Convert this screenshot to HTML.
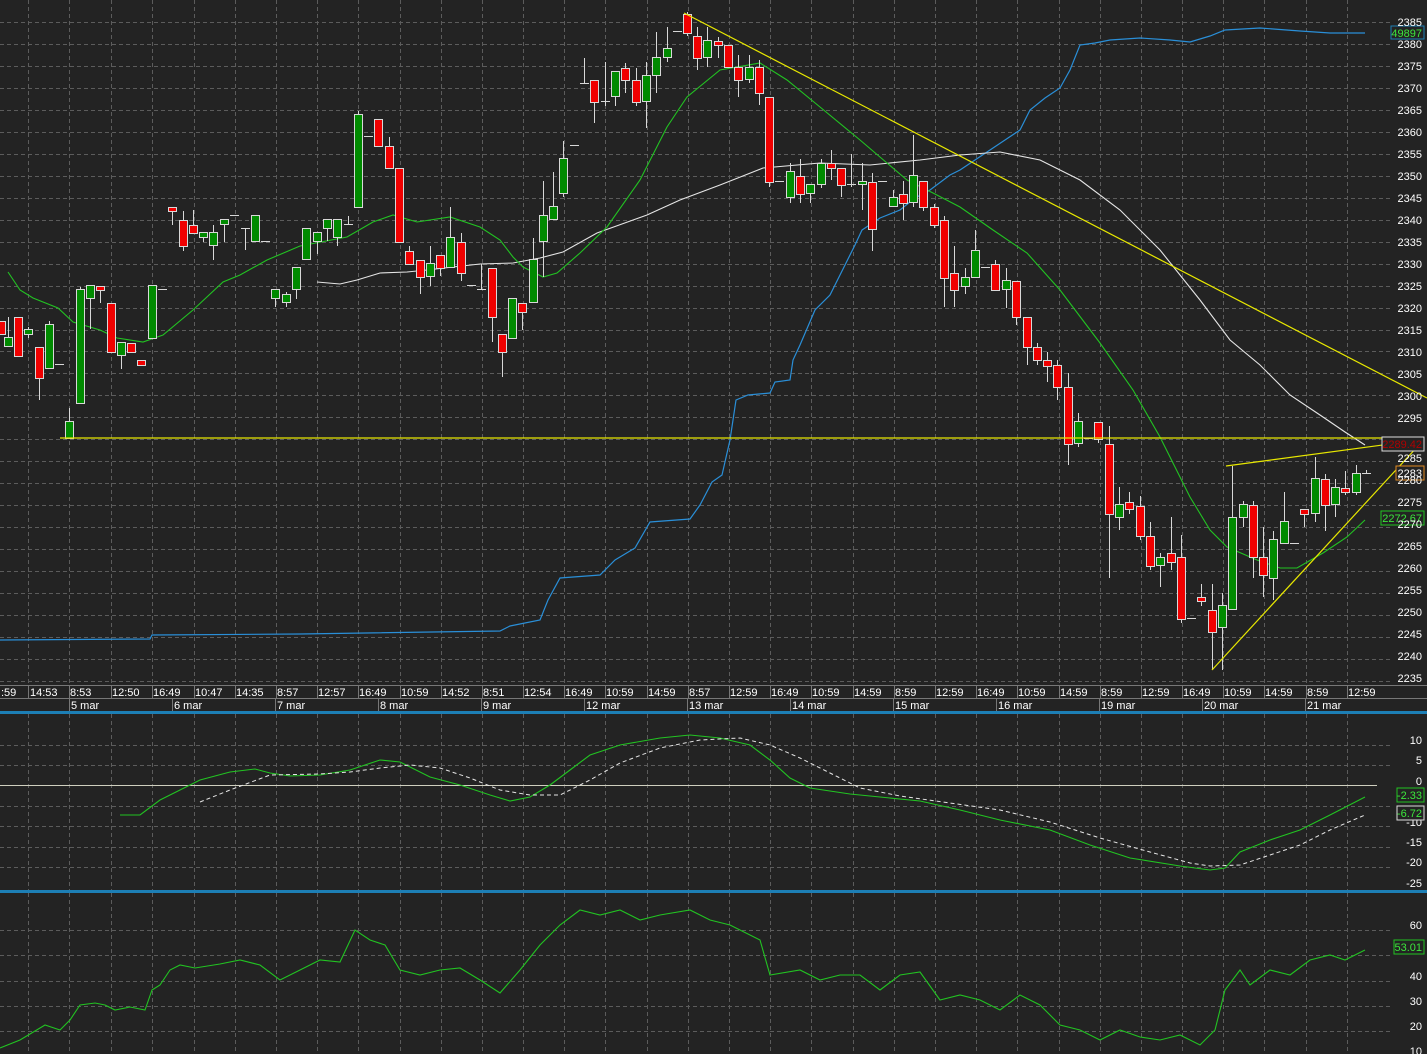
<!DOCTYPE html>
<html><head><meta charset="utf-8"><style>
html,body{margin:0;padding:0;background:#232323;}
svg{display:block}
text{font-family:"Liberation Sans",sans-serif;font-size:11px;fill:#fff}
</style></head><body>
<svg id="s" width="1427" height="1054" viewBox="0 0 1427 1054" xmlns="http://www.w3.org/2000/svg">
<rect width="1427" height="1054" fill="#232323"/>
<g id="grid"></g>
<!-- axis lines -->
<line x1="0" y1="685.5" x2="1427" y2="685.5" stroke="#777"/>
<line x1="0" y1="698.5" x2="1427" y2="698.5" stroke="#777"/>
<rect x="0" y="711" width="1427" height="3" fill="#1d7fb5"/>
<rect x="0" y="890" width="1427" height="3" fill="#1d7fb5"/>
<g id="seps"></g>
<!-- blue line -->
<polyline fill="none" stroke="#2a8fd8" stroke-width="1.2" points="0,640 150,639 152,635 300,634 500,631 510,626 540,620 548,600 560,578 600,575 615,560 635,548 650,522 690,519 700,505 712,482 722,475 730,440 736,400 748,395 770,393 775,382 790,380 793,360 800,345 815,310 830,295 845,265 855,245 862,230 880,218 900,210 915,198 930,190 950,175 960,170 975,160 990,150 1005,140 1020,130 1030,110 1045,98 1060,88 1070,70 1080,45 1095,43 1110,40 1140,38 1170,40 1190,42 1210,36 1225,30 1260,28 1300,31 1330,33 1365,33"/>
<!-- white MA -->
<polyline fill="none" stroke="#e6e6e6" stroke-width="1.1" points="317,282 340,284 357,280 380,273 407,272 427,270 453,267 480,264 513,263 540,258 563,252 597,233 647,215 680,200 720,185 763,168 820,163 870,165 920,160 960,155 1000,152 1040,160 1080,180 1120,210 1160,250 1200,300 1230,340 1260,365 1290,395 1320,415 1345,432 1365,445"/>
<!-- green MA -->
<polyline fill="none" stroke="#22c322" stroke-width="1.1" points="8,272 20,290 33,298 58,308 73,322 100,330 117,338 143,342 163,335 193,310 223,282 240,275 267,260 300,246 347,237 373,222 393,215 417,222 450,217 480,227 500,240 513,257 523,267 543,277 557,273 580,253 607,227 640,180 667,127 687,97 720,70 760,63 787,80 820,107 860,140 887,163 907,180 933,193 960,207 993,230 1027,253 1060,290 1100,343 1133,390 1160,437 1190,497 1210,530 1227,547 1257,560 1280,568 1297,568 1323,553 1347,537 1365,520"/>
<g id="candles"></g>
<!-- yellow lines -->
<g stroke="#e8e800" stroke-width="1.2" fill="none">
<line x1="60" y1="438" x2="1400" y2="438"/>
<line x1="684" y1="13" x2="1427" y2="398"/>
<line x1="1226" y1="466" x2="1420" y2="440"/>
<line x1="1212" y1="670" x2="1418" y2="446"/>
</g>
<!-- main price labels -->
<g id="plabels" text-anchor="end"></g>
<rect x="1391" y="26" width="33" height="13" fill="#232323" stroke="#1d7fb5"/>
<text x="1422" y="37" text-anchor="end" style="fill:#3ce63c">49897</text>
<rect x="1382" y="437" width="42" height="14" fill="#232323" stroke="#ddd"/>
<text x="1422" y="448" text-anchor="end" style="fill:#b00000">2289.42</text>
<rect x="1396" y="466" width="28" height="14" fill="#232323" stroke="#e08a20"/>
<text x="1422" y="477" text-anchor="end">2283</text>
<rect x="1381" y="511" width="43" height="14" fill="#232323" stroke="#22c322"/>
<text x="1422" y="522" text-anchor="end" style="fill:#3ce63c">2272.67</text>
<!-- time labels -->
<g id="tl">
<text x="1" y="696">:59</text><text x="30" y="696">14:53</text><text x="70" y="696">8:53</text><text x="112" y="696">12:50</text><text x="153" y="696">16:49</text><text x="195" y="696">10:47</text><text x="236" y="696">14:35</text><text x="277" y="696">8:57</text><text x="318" y="696">12:57</text><text x="359" y="696">16:49</text><text x="401" y="696">10:59</text><text x="442" y="696">14:52</text><text x="483" y="696">8:51</text><text x="524" y="696">12:54</text><text x="565" y="696">16:49</text><text x="606" y="696">10:59</text><text x="648" y="696">14:59</text><text x="689" y="696">8:57</text><text x="730" y="696">12:59</text><text x="771" y="696">16:49</text><text x="812" y="696">10:59</text><text x="854" y="696">14:59</text><text x="895" y="696">8:59</text><text x="936" y="696">12:59</text><text x="977" y="696">16:49</text><text x="1018" y="696">10:59</text><text x="1060" y="696">14:59</text><text x="1101" y="696">8:59</text><text x="1142" y="696">12:59</text><text x="1183" y="696">16:49</text><text x="1224" y="696">10:59</text><text x="1265" y="696">14:59</text><text x="1307" y="696">8:59</text><text x="1348" y="696">12:59</text>
<text x="71" y="709">5 mar</text><text x="174" y="709">6 mar</text><text x="277" y="709">7 mar</text><text x="380" y="709">8 mar</text><text x="483" y="709">9 mar</text><text x="586" y="709">12 mar</text><text x="689" y="709">13 mar</text><text x="792" y="709">14 mar</text><text x="895" y="709">15 mar</text><text x="998" y="709">16 mar</text><text x="1101" y="709">19 mar</text><text x="1204" y="709">20 mar</text><text x="1307" y="709">21 mar</text>
</g>
<!-- panel 2 -->
<line x1="0" y1="785.5" x2="1377" y2="785.5" stroke="#cfcfbf" stroke-width="1"/>
<polyline fill="none" stroke="#22c322" stroke-width="1.1" points="120,815 140,815 160,800 180,790 200,780 230,772 255,769 270,773 290,776 320,775 350,770 380,760 400,762 430,777 460,785 490,795 510,801 530,797 550,785 570,770 590,755 620,745 660,738 690,735 720,738 750,745 770,760 790,778 810,788 850,794 880,797 920,801 960,810 1000,820 1050,830 1090,845 1130,858 1180,866 1210,870 1225,868 1240,852 1270,840 1300,830 1330,815 1365,797"/>
<polyline fill="none" stroke="#e6e6e6" stroke-width="1" stroke-dasharray="4,3" points="200,802 230,790 270,775 320,774 350,772 380,768 410,765 440,768 470,778 500,790 530,795 560,795 590,780 620,763 660,748 700,740 740,738 770,745 800,758 830,773 860,788 900,796 950,803 1000,810 1050,822 1100,838 1150,852 1190,863 1210,866 1240,865 1270,855 1300,845 1330,830 1365,815"/>
<g text-anchor="end">
<text x="1422" y="744">10</text><text x="1422" y="764">5</text><text x="1422" y="785">0</text><text x="1422" y="826">-10</text><text x="1422" y="846">-15</text><text x="1422" y="866">-20</text><text x="1422" y="887">-25</text>
</g>
<rect x="1397" y="788" width="27" height="14" fill="#232323" stroke="#22c322"/>
<text x="1422" y="799" text-anchor="end" style="fill:#3ce63c">-2.33</text>
<rect x="1397" y="806" width="27" height="14" fill="#232323" stroke="#ddd"/>
<text x="1422" y="817" text-anchor="end" style="fill:#3ce63c">-6.72</text>
<!-- panel 3 -->
<polyline fill="none" stroke="#22c322" stroke-width="1.1" points="0,1048 20,1040 45,1025 60,1030 70,1020 80,1005 95,1003 105,1005 115,1010 130,1007 145,1010 152,990 160,985 170,970 180,965 195,968 220,964 240,960 260,965 280,980 300,970 320,960 340,962 355,930 370,940 385,945 400,970 420,975 440,970 460,968 480,980 500,993 520,970 540,945 560,925 580,910 600,915 620,910 640,920 660,915 690,910 710,920 730,925 760,940 770,975 800,970 820,980 840,975 860,975 880,990 900,975 920,972 940,1000 960,995 980,1000 1000,1010 1020,995 1040,1005 1060,1025 1080,1030 1100,1040 1120,1030 1140,1037 1160,1040 1180,1035 1200,1045 1215,1030 1225,990 1240,970 1250,985 1270,970 1290,975 1310,960 1330,955 1345,960 1365,950"/>
<g text-anchor="end">
<text x="1422" y="929">60</text><text x="1422" y="980">40</text><text x="1422" y="1005">30</text><text x="1422" y="1030">20</text><text x="1422" y="1055">10</text>
</g>
<rect x="1394" y="940" width="30" height="14" fill="#232323" stroke="#22c322"/>
<text x="1422" y="951" text-anchor="end" style="fill:#3ce63c">53.01</text>
</svg>
<script>
(function(){
var NS="http://www.w3.org/2000/svg";
function el(p,t,a){var e=document.createElementNS(NS,t);for(var k in a)e.setAttribute(k,a[k]);p.appendChild(e);return e;}
var g=document.getElementById('grid');
var vx=[28,69,111,152,194,235,276,317,358,400,441,482,523,564,605,647,688,729,770,811,853,894,935,976,1017,1059,1100,1141,1182,1223,1264,1306,1347];
var sh="#5c5c5c";
vx.forEach(function(x){
 el(g,'line',{x1:x+.5,y1:0,x2:x+.5,y2:685,stroke:sh,'stroke-dasharray':'4,3'});
 el(g,'line',{x1:x+.5,y1:714,x2:x+.5,y2:890,stroke:sh,'stroke-dasharray':'4,3'});
 el(g,'line',{x1:x+.5,y1:893,x2:x+.5,y2:1054,stroke:sh,'stroke-dasharray':'4,3'});
 el(g,'line',{x1:x+.5,y1:686,x2:x+.5,y2:698,stroke:'#777'});
});
[69,172,275,378,481,584,687,790,893,996,1099,1202,1305].forEach(function(x){
 el(g,'line',{x1:x+.5,y1:699,x2:x+.5,y2:711,stroke:'#777'});
});
for(var p=2385;p>=2235;p-=5){var y=Math.round(22+(2385-p)*4.3933)+.5;
 el(g,'line',{x1:0,y1:y,x2:1390,y2:y,stroke:sh,'stroke-dasharray':'4,3'});}
[745,765,806,826,847,867].forEach(function(y){el(g,'line',{x1:0,y1:y+.5,x2:1390,y2:y+.5,stroke:sh,'stroke-dasharray':'4,3'});});
[930,955,981,1006,1031].forEach(function(y){el(g,'line',{x1:0,y1:y+.5,x2:1390,y2:y+.5,stroke:sh,'stroke-dasharray':'4,3'});});
var c=[[1,'r',321,334,321,334],[8,'g',337,346,317,346],[18,'r',317,356,317,356],[28,'g',329,334,327,338],[39,'r',347,378,347,400],[49,'g',324,368,321,368],[59,'d',364,364,364,364],[69,'g',421,438,408,438],[80,'g',289,403,287,403],[90,'g',285,298,285,329],[100,'r',286,290,286,303],[111,'r',303,352,303,352],[121,'g',342,355,342,369],[131,'r',343,352,343,352],[141,'r',360,365,360,365],[152,'g',285,338,285,338],[162,'d',289,289,289,289],[172,'r',207,211,207,225],[183,'r',220,246,211,251],[193,'r',225,233,210,233],[203,'g',232,237,232,242],[213,'g',232,245,225,260],[224,'g',219,224,219,242],[234,'d',215,215,215,215],[245,'d',228,228,228,250],[255,'g',215,241,215,241],[265,'d',241,241,241,241],[275,'g',289,298,289,307],[286,'g',294,302,292,307],[296,'g',267,289,267,299],[306,'g',228,259,228,259],[317,'g',232,241,232,254],[327,'g',219,228,219,241],[337,'g',219,237,219,246],[348,'d',224,224,216,224],[358,'g',114,207,111,207],[368,'d',136,136,136,136],[378,'r',119,146,119,146],[389,'r',146,168,137,168],[399,'r',168,242,168,242],[409,'r',251,264,246,264],[420,'r',260,277,260,294],[430,'g',263,276,246,286],[440,'r',255,268,255,276],[450,'g',237,267,207,267],[461,'r',242,273,233,281],[471,'d',285,285,285,285],[481,'d',289,289,264,289],[492,'r',268,317,268,342],[502,'r',334,352,334,377],[512,'g',298,338,298,338],[522,'r',303,312,303,330],[533,'g',259,302,238,302],[543,'g',215,241,181,277],[553,'g',206,219,172,219],[563,'g',158,193,141,197],[574,'d',145,145,145,145],[584,'d',83,83,58,83],[594,'r',80,102,80,123],[605,'d',101,101,62,106],[615,'g',71,96,71,106],[625,'r',68,80,63,93],[636,'r',80,102,68,106],[646,'g',75,101,62,128],[656,'g',57,75,32,93],[667,'g',48,57,27,62],[677,'d',31,31,31,31],[687,'r',14,33,12,36],[697,'r',36,58,27,70],[707,'g',40,57,27,67],[718,'r',41,45,37,58],[728,'r',45,67,45,67],[738,'r',67,80,55,97],[749,'g',67,79,55,83],[759,'r',67,93,60,105],[769,'r',97,182,97,187],[779,'d',181,181,181,181],[790,'g',171,197,163,203],[800,'r',176,194,159,203],[810,'g',184,193,184,203],[821,'g',163,184,159,188],[831,'r',163,168,150,180],[841,'r',168,185,168,197],[851,'d',184,184,154,187],[862,'g',181,184,163,210],[872,'r',182,229,173,251],[882,'d',181,181,181,181],[893,'g',197,206,190,206],[903,'r',194,203,181,220],[913,'g',175,202,135,207],[923,'r',181,207,181,211],[934,'r',207,225,204,228],[944,'r',220,278,216,307],[954,'r',273,290,246,307],[965,'g',277,286,268,294],[975,'g',250,277,230,277],[985,'d',267,267,267,267],[995,'r',264,290,260,290],[1006,'g',280,289,268,308],[1016,'r',281,317,281,325],[1027,'r',317,347,317,365],[1037,'r',347,360,343,365],[1047,'r',360,366,352,382],[1057,'r',365,387,360,400],[1068,'r',387,444,373,465],[1078,'g',421,443,413,447],[1088,'d',438,438,438,438],[1098,'r',422,439,422,443],[1109,'r',444,514,426,578],[1119,'g',504,517,487,530],[1129,'r',502,509,492,514],[1140,'r',506,536,496,540],[1150,'r',536,566,522,570],[1160,'g',557,565,553,587],[1171,'r',553,562,517,570],[1181,'r',557,619,535,623],[1191,'d',618,618,618,618],[1201,'r',597,601,584,606],[1212,'r',610,632,584,670],[1222,'g',605,627,593,670],[1232,'g',517,609,466,609],[1243,'g',504,517,501,527],[1253,'r',505,557,501,578],[1263,'r',557,575,527,597],[1273,'g',539,578,531,600],[1284,'g',521,543,492,543],[1294,'d',543,543,543,543],[1304,'r',509,514,509,527],[1315,'g',478,513,457,522],[1325,'r',479,505,474,531],[1335,'g',487,504,479,517],[1345,'r',488,492,471,495],[1356,'g',473,492,465,495],[1366,'d',473,473,470,473]];
var cg=document.getElementById('candles');
c.forEach(function(k){var x=k[0]+.5;
 if(k[4]<k[5]) el(cg,'line',{x1:x,y1:k[4],x2:x,y2:k[5],stroke:'#d8d8d8'});
 if(k[1]=='d'){el(cg,'line',{x1:k[0]-4,y1:k[2]+.5,x2:k[0]+5,y2:k[2]+.5,stroke:'#d8d8d8'});}
 else el(cg,'rect',{x:k[0]-3.5,y:k[2]+.5,width:8,height:Math.max(k[3]-k[2],2),fill:k[1]=='g'?'#008a00':'#f00000',stroke:'#d8d8d8','stroke-width':1});
});
})();
</script>
<svg width="0" height="0" style="position:absolute;left:0;top:0">
</svg>
<div style="position:absolute;left:0;top:0;width:1427px;height:1054px;pointer-events:none">
<svg width="1427" height="1054" style="position:absolute;left:0;top:0">
<g text-anchor="end" font-family="Liberation Sans, sans-serif" font-size="11" fill="#fff">
<text x="1422" y="26">2385</text><text x="1422" y="48">2380</text><text x="1422" y="70">2375</text><text x="1422" y="92">2370</text><text x="1422" y="114">2365</text><text x="1422" y="136">2360</text><text x="1422" y="158">2355</text><text x="1422" y="180">2350</text><text x="1422" y="202">2345</text><text x="1422" y="224">2340</text><text x="1422" y="246">2335</text><text x="1422" y="268">2330</text><text x="1422" y="290">2325</text><text x="1422" y="312">2320</text><text x="1422" y="334">2315</text><text x="1422" y="356">2310</text><text x="1422" y="378">2305</text><text x="1422" y="400">2300</text><text x="1422" y="422">2295</text><text x="1422" y="462">2285</text><text x="1422" y="484">2280</text><text x="1422" y="506">2275</text><text x="1422" y="528">2270</text><text x="1422" y="550">2265</text><text x="1422" y="572">2260</text><text x="1422" y="594">2255</text><text x="1422" y="616">2250</text><text x="1422" y="638">2245</text><text x="1422" y="660">2240</text><text x="1422" y="682">2235</text>
</g>
</svg>
</div>
</body></html>
